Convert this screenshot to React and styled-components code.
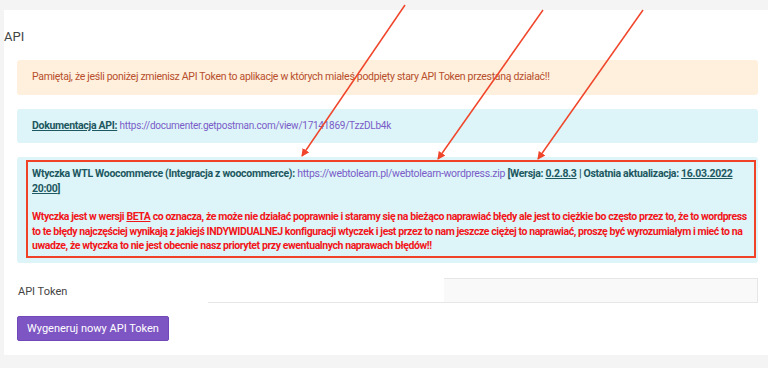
import React from 'react'
import styled, { createGlobalStyle } from 'styled-components'

const GlobalStyle = createGlobalStyle`
  html, body {
    margin: 0;
    padding: 0;
    background: #f4f4f4;
    font-family: Roboto, "Liberation Sans", sans-serif;
  }
`

const Page = styled.div`
  position: relative;
  width: 768px;
  height: 368px;
  overflow: hidden;
  padding-top: 10px;
  box-sizing: border-box;
`

const Card = styled.div`
  background: #fff;
  margin-left: 4px;
  padding: 0 10px 14px 13px;
  height: 345px;
  box-sizing: border-box;
`

const Title = styled.h2`
  margin: 0 0 0 -13px;
  padding: 18px 0 15px;
  font-size: 13px;
  font-weight: 400;
  line-height: 17px;
  color: #444;
`

const Alert = styled.div`
  background: ${p => p.bg};
  color: ${p => p.color || '#1d5861'};
  border-radius: 3px;
  font-size: 10.5px;
  letter-spacing: -0.3px;
  line-height: 14.5px;
  padding: ${p => p.pad || '10px 15px'};
  margin-bottom: ${p => p.mb || '14px'};
`

const Marked = styled.div`
  border: 2px solid #f04226;
  padding: 5px 4px 2px;
`

const Strong = styled.span`
  font-weight: 700;
  text-decoration: ${p => (p.u ? 'underline' : 'none')};
`

const Link = styled.span`
  color: #7a5cc8;
  font-size: ${p => p.size || 'inherit'};
  letter-spacing: ${p => p.ls || 'inherit'};
`

const Warn = styled.p`
  margin: 14px 0 0;
  color: #f2161b;
  font-weight: 700;
  letter-spacing: -0.42px;
`

const TokenRow = styled.div`
  display: flex;
  align-items: flex-end;
  margin-top: 15px;
  height: 25px;
`

const Label = styled.div`
  width: 190px;
  font-size: 11px;
  color: #444;
  align-self: center;
  padding-left: 1px;
  padding-top: 2px;
`

const Field = styled.div`
  flex: 1;
  display: flex;
  justify-content: flex-end;
  border-bottom: 1px solid #e6e6e6;
  height: 24px;
`

const FieldBox = styled.div`
  width: 313px;
  background: #f9f9f9;
  border: 1px solid #e6e6e6;
  border-left: none;
  border-bottom: none;
`

const Button = styled.button`
  margin-top: 13px;
  background: #7e56c4;
  color: #fff;
  border: 1px solid #7048b8;
  border-radius: 2px;
  height: 25px;
  padding: 0 9px;
  font-family: inherit;
  font-size: 11px;
`

const Arrows = styled.svg`
  position: absolute;
  left: 0;
  top: 0;
  pointer-events: none;
`

const arrows = [
  [405, 5, 302, 156],
  [543, 10, 438, 159],
  [643, 10, 538, 159],
]

const App = () => (
  <Page>
    <GlobalStyle />
    <Card>
      <Title>API</Title>
      <Alert bg="#fef0dc" color="#b84e2c">
        Pamiętaj, że jeśli poniżej zmienisz API Token to aplikacje w których miałeś podpięty stary API Token przestaną działać!!
      </Alert>
      <Alert bg="#ddf5f8">
        <Strong u>Dokumentacja API:</Strong>{' '}
        <Link size="10px" ls="-0.25px">https://documenter.getpostman.com/view/17141869/TzzDLb4k</Link>
      </Alert>
      <Alert bg="#ddf5f8" pad="3px 2px 5px 9px" mb="0">
        <Marked>
          <Strong>Wtyczka WTL Woocommerce (Integracja z woocommerce): </Strong>
          <Link>https://webtolearn.pl/webtolearn-wordpress.zip</Link>{' '}
          <Strong>[Wersja: </Strong><Strong u>0.2.8.3</Strong>
          <Strong> | Ostatnia aktualizacja: </Strong><Strong u>16.03.2022 20:00</Strong><Strong>]</Strong>
          <Warn>
            Wtyczka jest w wersji <Strong u>BETA</Strong> co oznacza, że może nie działać poprawnie i staramy się na bieżąco naprawiać błędy ale jest to ciężkie bo często przez to, że to wordpress to te błędy najczęściej wynikają z jakiejś INDYWIDUALNEJ konfiguracji wtyczek i jest przez to nam jeszcze ciężej to naprawiać, proszę być wyrozumiałym i mieć to na uwadze, że wtyczka to nie jest obecnie nasz priorytet przy ewentualnych naprawach błędów!!
          </Warn>
        </Marked>
      </Alert>
      <TokenRow>
        <Label>API Token</Label>
        <Field>
          <FieldBox />
        </Field>
      </TokenRow>
      <Button>Wygeneruj nowy API Token</Button>
    </Card>
    <Arrows width="768" height="368" viewBox="0 0 768 368">
      <defs>
        <marker id="head" markerWidth="8" markerHeight="8" refX="7" refY="4" orient="auto" markerUnits="userSpaceOnUse">
          <path d="M0,0 L8,4 L0,8 Z" fill="#f0452a" />
        </marker>
      </defs>
      {arrows.map(([x1, y1, x2, y2], i) => (
        <line key={i} x1={x1} y1={y1} x2={x2} y2={y2} stroke="#f0452a" strokeWidth="1.5" markerEnd="url(#head)" />
      ))}
    </Arrows>
  </Page>
)

export default App
